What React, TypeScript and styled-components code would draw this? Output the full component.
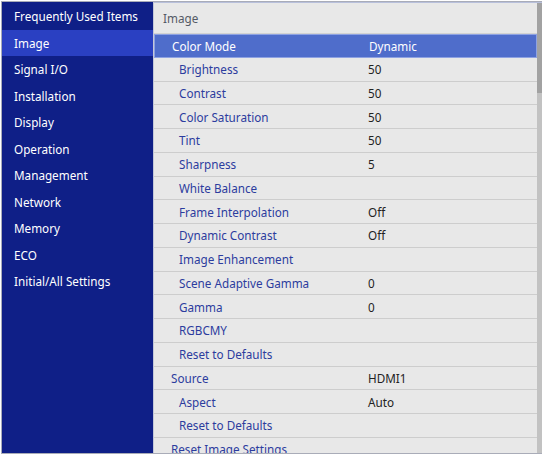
import styled, { createGlobalStyle } from 'styled-components';

const Global = createGlobalStyle`
  body {
    margin: 0;
    background: #ffffff;
    font-family: "Noto Sans", "Open Sans", sans-serif;
  }
`;

const Frame = styled.div`
  margin: 1px 0 0 1px;
  width: 541px;
  height: 453px;
  border: 1px solid #a9acb8;
  border-right: none;
  box-sizing: border-box;
  display: flex;
  overflow: hidden;
`;

const Sidebar = styled.div`
  width: 151px;
  flex-shrink: 0;
  background: #0f1f87;
  padding-top: 1px;
  display: flex;
  flex-direction: column;
`;

const SideItem = styled.div<{ $active?: boolean }>`
  height: 26.5px;
  flex-shrink: 0;
  display: flex;
  align-items: center;
  padding-left: 12px;
  font-size: 11.7px;
  color: #ffffff;
  background: ${(p) => (p.$active ? '#2a40c2' : 'transparent')};
  white-space: nowrap;
`;

const Panel = styled.div`
  flex: 1;
  display: flex;
  background: #e8e8e8;
  border-left: 1px solid #c4c8d8;
  border-top: 1px solid #b8c0dc;
  min-width: 0;
`;

const List = styled.div`
  flex: 1;
  display: flex;
  flex-direction: column;
  min-width: 0;
`;

const Header = styled.div`
  height: 31px;
  flex-shrink: 0;
  display: flex;
  align-items: center;
  padding-left: 9px;
  font-size: 11.7px;
  color: #555a66;
  border-bottom: 1px solid #d2d2d2;
  box-sizing: border-box;
`;

const Row = styled.div<{ $active?: boolean }>`
  height: 23.75px;
  flex-shrink: 0;
  display: flex;
  align-items: center;
  box-sizing: border-box;
  font-size: 11.7px;
  background: ${(p) => (p.$active ? '#4f6dcb' : 'transparent')};
  border: ${(p) => (p.$active ? '1px solid #8ea2e2' : 'none')};
  border-bottom: 1px solid ${(p) => (p.$active ? '#8ea2e2' : '#cdcdcd')};
  white-space: nowrap;
`;

const Label = styled.span<{ $active?: boolean; $level: number }>`
  box-sizing: border-box;
  width: 214px;
  padding-left: ${(p) => (p.$level === 1 ? 17 : 25)}px;
  color: ${(p) => (p.$active ? '#ffffff' : '#2c3c9e')};
  flex-shrink: 0;
`;

const Value = styled.span<{ $active?: boolean }>`
  color: ${(p) => (p.$active ? '#ffffff' : '#222222')};
`;

const Scroll = styled.div`
  width: 5px;
  flex-shrink: 0;
  background: #c2c2c2;
  display: flex;
  flex-direction: column;
`;

const Thumb = styled.div`
  height: 90px;
  background: #a2a2a2;
`;

const menu = [
  'Frequently Used Items',
  'Image',
  'Signal I/O',
  'Installation',
  'Display',
  'Operation',
  'Management',
  'Network',
  'Memory',
  'ECO',
  'Initial/All Settings',
];

const rows: { label: string; value?: string; level: number; active?: boolean }[] = [
  { label: 'Color Mode', value: 'Dynamic', level: 1, active: true },
  { label: 'Brightness', value: '50', level: 2 },
  { label: 'Contrast', value: '50', level: 2 },
  { label: 'Color Saturation', value: '50', level: 2 },
  { label: 'Tint', value: '50', level: 2 },
  { label: 'Sharpness', value: '5', level: 2 },
  { label: 'White Balance', level: 2 },
  { label: 'Frame Interpolation', value: 'Off', level: 2 },
  { label: 'Dynamic Contrast', value: 'Off', level: 2 },
  { label: 'Image Enhancement', level: 2 },
  { label: 'Scene Adaptive Gamma', value: '0', level: 2 },
  { label: 'Gamma', value: '0', level: 2 },
  { label: 'RGBCMY', level: 2 },
  { label: 'Reset to Defaults', level: 2 },
  { label: 'Source', value: 'HDMI1', level: 1 },
  { label: 'Aspect', value: 'Auto', level: 2 },
  { label: 'Reset to Defaults', level: 2 },
  { label: 'Reset Image Settings', level: 1 },
];

const App = () => {
  return (
    <>
      <Global />
      <Frame>
        <Sidebar>
          {menu.map((m) => (
            <SideItem key={m} $active={m === 'Image'}>
              {m}
            </SideItem>
          ))}
        </Sidebar>
        <Panel>
          <List>
            <Header>Image</Header>
            {rows.map((r, i) => (
              <Row key={i} $active={r.active}>
                <Label $active={r.active} $level={r.level}>
                  {r.label}
                </Label>
                {r.value && <Value $active={r.active}>{r.value}</Value>}
              </Row>
            ))}
          </List>
          <Scroll>
            <Thumb />
          </Scroll>
        </Panel>
      </Frame>
    </>
  );
};

export default App;
